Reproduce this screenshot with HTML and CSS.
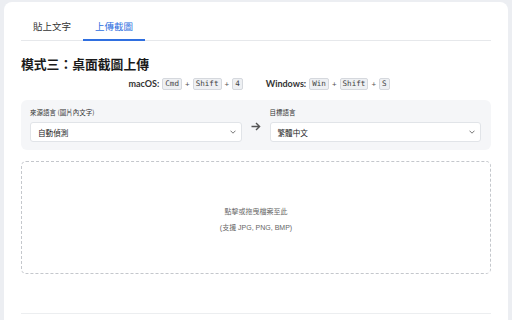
FILE: index.html
```html
<!DOCTYPE html>
<html lang="zh-Hant">
<head>
<meta charset="utf-8">
<link rel="stylesheet" href="styles.css">
</head>
<body>
<div class="card">
  <div class="tabs">
    <div class="tab">貼上文字</div>
    <div class="tab active">上傳截圖</div>
  </div>
  <h2 class="title">模式三：桌面截圖上傳</h2>
  <div class="shortcuts">
    <div class="group"><b>macOS:</b><kbd>Cmd</kbd><span class="plus">+</span><kbd>Shift</kbd><span class="plus">+</span><kbd>4</kbd></div>
    <div class="group"><b>Windows:</b><kbd>Win</kbd><span class="plus">+</span><kbd>Shift</kbd><span class="plus">+</span><kbd>S</kbd></div>
  </div>
  <div class="langs">
    <div class="field">
      <div class="label">來源語言 (圖片內文字)</div>
      <div class="select"><span>自動偵測</span><svg class="chev" width="6" height="4" viewBox="0 0 6 4"><path d="M0.5 0.7 L3 3.2 L5.5 0.7" fill="none" stroke="#666" stroke-width="0.9"/></svg></div>
    </div>
    <div class="arrow"><svg width="10" height="9" viewBox="0 0 10 9"><path d="M0.5 4.5 H8.5 M5 1 L8.6 4.5 L5 8" fill="none" stroke="#555" stroke-width="1.4"/></svg></div>
    <div class="field">
      <div class="label">目標語言</div>
      <div class="select"><span>繁體中文</span><svg class="chev" width="6" height="4" viewBox="0 0 6 4"><path d="M0.5 0.7 L3 3.2 L5.5 0.7" fill="none" stroke="#666" stroke-width="0.9"/></svg></div>
    </div>
  </div>
  <div class="drop">
    <div class="drop-main">點擊或拖曳檔案至此</div>
    <div class="drop-sub">(支援 JPG, PNG, BMP)</div>
  </div>
  <div class="footer-line"></div>
</div>
</body>
</html>
```
FILE: styles.css
```css
* { box-sizing: border-box; }
html, body { margin: 0; padding: 0; }
body {
  background: #eceef2;
  padding: 2px 4px 0;
  font-family: Lato, "Noto Sans CJK TC", sans-serif;
  color: #222;
  overflow: hidden;
  height: 320px;
}
.card {
  background: #fff;
  border-radius: 8px 8px 0 0;
  padding: 17px 17px 0;
  height: 318px;
}
.tabs {
  display: flex;
  border-bottom: 1px solid #e6e8eb;
}
.tab {
  font-size: 9.5px;
  line-height: 10px;
  padding: 2px 12px 8px;
  color: #333;
  font-family: "Noto Sans CJK TC", sans-serif;
}
.tab.active {
  color: #2f6fe0;
  border-bottom: 2px solid #2f6fe0;
  margin-bottom: -1px;
}
.title {
  margin: 15px 0 0;
  font-size: 12.8px;
  line-height: 16px;
  font-weight: 700;
  color: #1a1a1a;
  font-family: "Noto Sans CJK TC", sans-serif;
}
.shortcuts {
  display: flex;
  justify-content: center;
  gap: 23px;
  margin-top: 5px;
  height: 13px;
  align-items: center;
  padding-left: 6px;
}
.group {
  display: flex;
  align-items: center;
  gap: 3px;
  font-size: 9px;
  color: #333;
}
.group b { font-weight: 700; }
.plus { font-size: 8px; color: #555; }
kbd {
  font-family: "DejaVu Sans Mono", monospace;
  font-size: 7.6px;
  line-height: 10px;
  padding: 0 2px;
  background: #eef0f3;
  border: 1px solid #d5d8dd;
  border-radius: 2px;
  color: #444;
}
.langs {
  margin-top: 10px;
  background: #f5f6f8;
  border-radius: 6px;
  padding: 8px 10px 8px 9px;
  display: grid;
  grid-template-columns: 1fr 28px 1fr;
  align-items: center;
}
.label {
  font-size: 6.5px;
  line-height: 9px;
  color: #333;
  margin-bottom: 5px;
  font-family: "Noto Sans CJK TC", sans-serif;
}
.select {
  height: 20px;
  background: #fff;
  border: 1px solid #e1e4e8;
  border-radius: 3px;
  display: flex;
  align-items: center;
  justify-content: space-between;
  padding: 0 5px 0 7px;
  font-size: 7.6px;
  color: #222;
  font-family: "Noto Sans CJK TC", sans-serif;
}
.chev { display: block; }
.arrow {
  display: flex;
  justify-content: center;
  padding-top: 2px;
}
.drop {
  margin-top: 11px;
  height: 113px;
  border: 1px dashed #c4c7cc;
  border-radius: 5px;
  display: flex;
  flex-direction: column;
  align-items: center;
  justify-content: center;
  gap: 7px;
  padding-top: 4px;
  color: #666;
  font-family: "Noto Sans CJK TC", sans-serif;
}
.drop-main { font-size: 7px; line-height: 9px; }
.drop-sub { font-size: 7px; line-height: 9px; font-family: "Liberation Sans", "Noto Sans CJK TC", sans-serif; }
.footer-line {
  margin-top: 39px;
  border-top: 1px solid #eceef0;
}
```
